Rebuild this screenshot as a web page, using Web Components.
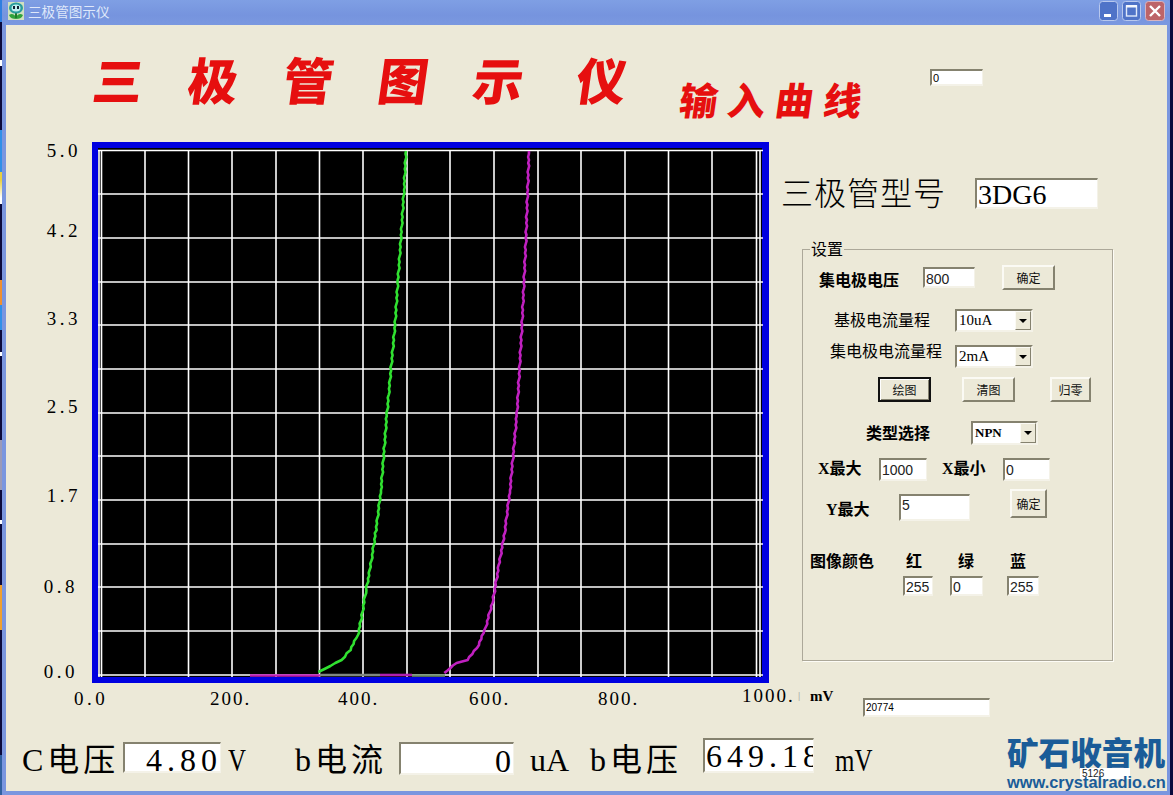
<!DOCTYPE html>
<html lang="zh">
<head>
<meta charset="utf-8">
<title>三极管图示仪</title>
<style>
    html, body { margin: 0; padding: 0; height: 100%; overflow: hidden; background: #0a0a3c; }
    body { font-family: "Liberation Serif", "Noto Sans CJK SC", serif; color: #000; }
</style>
</head>
<body>

<app-window caption="三极管图示仪">
    <form-row style="height:116px;padding-left:84px;align-items:flex-start">
        <big-title style="margin-top:26px;font-size:50px;letter-spacing:45px;width:587px">三极管图示<span style="margin-left:8px">仪</span></big-title>
        <big-title style="margin-top:53px;font-size:38px;letter-spacing:10px;width:253px">输入曲线</big-title>
        <sunk-field style="margin-top:44px;width:53px;height:17px;font-size:11px">0</sunk-field>
    </form-row>

    <form-row style="height:543px;align-items:flex-start">
        <axis-y></axis-y>
        <iv-plot></iv-plot>
        <side-panel></side-panel>
    </form-row>

    <form-row style="height:34px;padding-left:68px;align-items:flex-start">
        <axis-label style="width:136px;margin-top:5px;letter-spacing:3.5px">0.0</axis-label>
        <axis-label style="width:128px;margin-top:5px">200.</axis-label>
        <axis-label style="width:131px;margin-top:5px">400.</axis-label>
        <axis-label style="width:129px;margin-top:5px">600.</axis-label>
        <axis-label style="width:144px;margin-top:5px">800.</axis-label>
        <axis-label style="width:56px;margin-top:2px">1000.</axis-label>
        <axis-label style="width:12px;margin-top:1px;color:#999;font-size:11px;letter-spacing:0">|</axis-label>
        <form-label style="width:53px;margin-top:4px;font-size:15px;font-weight:700">mV</form-label>
        <sunk-field style="margin-top:14px;width:127px;height:19px;font-size:10px">20774</sunk-field>
    </form-row>

    <form-row style="height:73px;padding-left:16px;align-items:flex-start;font-size:32px">
        <form-label style="width:101px;margin-top:26px;line-height:32px;letter-spacing:4px">C电压</form-label>
        <sunk-field style="margin-top:24px;width:98px;height:31px;font-size:32px;line-height:22px;padding:4px 0 0 21px;overflow:visible;font-family:'Liberation Serif',serif;letter-spacing:5px">4.80</sunk-field>
        <form-label style="width:74px;margin-top:26px;line-height:32px;padding-left:7px;box-sizing:border-box"><squeeze-text>V</squeeze-text></form-label>
        <form-label style="width:104px;margin-top:26px;line-height:32px;letter-spacing:4px">b电流</form-label>
        <sunk-field style="margin-top:24px;width:115px;height:33px;font-size:32px;line-height:22px;padding:4px 2px 0 0;overflow:visible;font-family:'Liberation Serif',serif;justify-content:flex-end">0</sunk-field>
        <form-label style="width:76px;margin-top:26px;line-height:32px;padding-left:16px;box-sizing:border-box">uA</form-label>
        <form-label style="width:113px;margin-top:26px;line-height:32px;letter-spacing:4px">b电压</form-label>
        <sunk-field style="margin-top:20px;width:111px;height:35px;font-size:32px;line-height:28px;font-family:'Liberation Serif',serif;letter-spacing:5px">649.18</sunk-field>
        <form-label style="width:193px;margin-top:26px;line-height:32px;padding-left:21px;box-sizing:border-box"><squeeze-text>mV</squeeze-text></form-label>
        <site-logo style="margin-top:15px"></site-logo>
    </form-row>
</app-window>

<template id="side-panel-tpl">
    <style>
        :host { display: flex; flex-direction: column; margin-left: 14px; }
        .model { display: flex; align-items: center; margin-top: 37px; height: 31px; }
        .model form-label { width: 192px; font-size: 32px; line-height: 32px; letter-spacing: 1px; font-weight: 300; margin-top: -5px; font-family: "Noto Sans CJK SC", sans-serif; margin-left: -2px; }
        group-box { margin: 40px 0 0 19px; width: 311px; height: 412px; }
        .bold { font-weight: 700; font-size: 16px; line-height: 20px; }
        .plain { font-size: 16px; line-height: 20px; }
        sunk-field { font-size: 14px; font-family: "Liberation Sans", sans-serif; color: #222; }
        xp-combo { font-size: 15px; }
    </style>
    <div class="model">
        <form-label>三极管型号</form-label>
        <sunk-field style="width:123px;height:31px;font-size:28px;line-height:26px;padding-top:2px;color:#000;font-family:'Liberation Serif',serif;margin-left:2px">3DG6</sunk-field>
    </div>
    <group-box label="设置">
        <form-row style="height:25px;margin-top:15px;padding-left:16px">
            <form-label class="bold" style="width:104px;margin-top:6px">集电极电压</form-label>
            <sunk-field style="width:52px;height:21px;padding-top:2px">800</sunk-field>
            <xp-button style="margin-left:27px;width:53px;height:25px">确定</xp-button>
        </form-row>
        <form-row style="height:23px;margin-top:19px;padding-left:31px">
            <form-label class="plain" style="width:121px;margin-top:1px">基极电流量程</form-label>
            <xp-combo style="width:78px;height:23px">10uA</xp-combo>
        </form-row>
        <form-row style="height:23px;margin-top:13px;padding-left:27px">
            <form-label class="plain" style="width:125px;margin-top:-9px">集电极电流量程</form-label>
            <xp-combo style="width:78px;height:23px">2mA</xp-combo>
        </form-row>
        <form-row style="height:25px;margin-top:9px;padding-left:75px">
            <xp-button default style="width:53px;height:25px">绘图</xp-button>
            <xp-button style="margin-left:31px;width:53px;height:25px">清图</xp-button>
            <xp-button style="margin-left:35px;width:41px;height:25px">归零</xp-button>
        </form-row>
        <form-row style="height:24px;margin-top:19px;padding-left:63px">
            <form-label class="bold" style="width:105px;margin-top:2px">类型选择</form-label>
            <xp-combo style="width:67px;height:24px;font-size:13px;font-weight:700">NPN</xp-combo>
        </form-row>
        <form-row style="height:23px;margin-top:13px;padding-left:15px">
            <form-label class="bold" style="width:61px;margin-top:-1px">X最大</form-label>
            <sunk-field style="width:48px;height:23px">1000</sunk-field>
            <form-label class="bold" style="width:61px;margin-left:15px;margin-top:-1px">X最小</form-label>
            <sunk-field style="width:47px;height:23px">0</sunk-field>
        </form-row>
        <form-row style="height:32px;margin-top:8px;padding-left:23px;align-items:flex-start">
            <form-label class="bold" style="width:73px;margin-top:11px">Y最大</form-label>
            <sunk-field style="width:71px;height:27px;margin-top:5px;padding-bottom:6px">5</sunk-field>
            <xp-button style="margin-left:40px;width:37px;height:29px">确定</xp-button>
        </form-row>
        <form-row style="height:18px;margin-top:31px;padding-left:7px">
            <form-label class="bold" style="width:96px;margin-top:2px">图像颜色</form-label>
            <form-label class="bold" style="width:52px;margin-top:2px">红</form-label>
            <form-label class="bold" style="width:52px;margin-top:2px">绿</form-label>
            <form-label class="bold" style="width:20px;margin-top:2px">蓝</form-label>
        </form-row>
        <form-row style="height:20px;margin-top:6px;padding-left:100px">
            <sunk-field style="width:30px;height:20px;padding-top:2px">255</sunk-field>
            <sunk-field style="width:33px;height:20px;padding-top:2px;margin-left:17px">0</sunk-field>
            <sunk-field style="width:32px;height:20px;padding-top:2px;margin-left:24px">255</sunk-field>
        </form-row>
    </group-box>
</template>

<script>
    class AppWindow extends HTMLElement {
        constructor() {
            super();
            this.attachShadow({ mode: 'open' });
            const caption = this.getAttribute('caption') || '';
            this.shadowRoot.innerHTML = `
                <style>
                    :host { display: flex; width: 1173px; height: 795px; }
                    .desk { width: 2px; flex: none; background: linear-gradient(#2f7fe0 0 22px, #0a0a3c 22px 60px, #fff 60px 66px, #0a0a3c 66px 130px, #2f8fe8 130px 172px, #e8d040 172px 180px, #fff 198px 204px, #0a0a3c 204px 280px, #f09030 280px 305px, #3090e8 305px 330px, #0a0a3c 330px 352px, #fff 352px 356px, #0a0a3c 356px 440px, #9a9ab8 440px 490px, #0a0a3c 490px 520px, #fff 520px 524px, #0a0a3c 524px 585px, #f0a030 585px 630px, #0a0a3c 630px 755px, #3060a0 755px 795px); }
                    .desk.right { width: 3px; background: #0a0a3c; }
                    .frame { flex: 1; display: flex; flex-direction: column; background: #7a96df; }
                    .title { height: 25px; flex: none; display: flex; align-items: center; padding: 0 0 3px 6px; box-sizing: border-box;
                             background: linear-gradient(#7f9fe4, #7694de 60%, #7a98e0); border-radius: 4px 4px 0 0;
                             color: #dfe8fa; font: 13.6px "Noto Sans CJK SC", sans-serif; }
                    .title svg.icon { margin-right: 4px; flex: none; }
                    .title .cap { flex: 1; }
                    .btns { display: flex; gap: 4px; padding-right: 5px; }
                    .btns svg { display: block; }
                    .client { flex: 1; margin: 0 3px 4px 4px; background: #ece9d8; display: flex; flex-direction: column; }
                </style>
                <div class="desk"></div>
                <div class="frame">
                    <div class="title">
                        <svg class="icon" width="16" height="18" viewBox="0 0 16 18">
                            <rect width="16" height="18" fill="#cfe0c0"/>
                            <path d="M1 13c3-2 5-1 7 2 2-3 4-4 7-2-1 3-4 4-7 4s-6-1-7-4z" fill="#2fa33a"/>
                            <rect x="7" y="10" width="2" height="6" fill="#1e7a2a"/>
                            <ellipse cx="8" cy="6" rx="7" ry="5.5" fill="#2a9c9c"/>
                            <ellipse cx="8" cy="6" rx="4.5" ry="3.6" fill="#bfeff0"/>
                            <rect x="5" y="4" width="2" height="3" fill="#123"/>
                            <rect x="9" y="4" width="2" height="3" fill="#123"/>
                        </svg>
                        <span class="cap">${caption}</span>
                        <div class="btns">
                            <svg width="19" height="20" viewBox="0 0 19 20"><rect x=".5" y=".5" width="18" height="19" rx="3" fill="#4f73c8" stroke="#b8c8ee"/><rect x="5" y="13" width="7" height="3" fill="#fff"/></svg>
                            <svg width="19" height="20" viewBox="0 0 19 20"><rect x=".5" y=".5" width="18" height="19" rx="3" fill="#4f73c8" stroke="#b8c8ee"/><rect x="4.5" y="5" width="10" height="10" fill="none" stroke="#dfe8fa" stroke-width="1.4"/><rect x="4" y="4" width="11" height="2.5" fill="#f4f7fe"/></svg>
                            <svg width="20" height="20" viewBox="0 0 20 20"><rect x=".5" y=".5" width="19" height="19" rx="3" fill="#bd6468" stroke="#d8b4c0"/><path d="M5 5l10 10M15 5L5 15" stroke="#fff" stroke-width="2.4"/></svg>
                        </div>
                    </div>
                    <div class="client"><slot></slot></div>
                </div>
                <div class="desk right"></div>
            `;
        }
    }

    class BigTitle extends HTMLElement {
        constructor() {
            super();
            this.attachShadow({ mode: 'open' });
            this.shadowRoot.innerHTML = `
                <style>
                    :host { display: block; white-space: nowrap; color: #e60f0f; font-family: "Noto Sans CJK SC", sans-serif; font-weight: 900; line-height: 1.1; transform: skewX(-8deg); transform-origin: left bottom; }
                </style>
                <slot></slot>
            `;
        }
    }

    class FormRow extends HTMLElement {
        constructor() {
            super();
            this.attachShadow({ mode: 'open' });
            this.shadowRoot.innerHTML = `
                <style>
                    :host { display: flex; align-items: center; flex: none; box-sizing: border-box; }
                </style>
                <slot></slot>
            `;
        }
    }

    class FormLabel extends HTMLElement {
        constructor() {
            super();
            this.attachShadow({ mode: 'open' });
            this.shadowRoot.innerHTML = `
                <style>
                    :host { display: block; flex: none; white-space: nowrap; font-family: "Liberation Serif", "Noto Sans CJK SC", serif; }
                </style>
                <slot></slot>
            `;
        }
    }

    // the original font has narrow latin letters, Liberation Serif does not
    class SqueezeText extends HTMLElement {
        constructor() {
            super();
            this.attachShadow({ mode: 'open' });
            this.shadowRoot.innerHTML = `
                <style>
                    :host { display: inline-block; transform: scaleX(.78); transform-origin: left center; }
                </style>
                <slot></slot>
            `;
        }
    }

    class AxisLabel extends HTMLElement {
        constructor() {
            super();
            this.attachShadow({ mode: 'open' });
            this.shadowRoot.innerHTML = `
                <style>
                    :host { display: block; flex: none; height: 20px; white-space: nowrap; font: 19px/20px "Liberation Serif", serif; letter-spacing: 2px; }
                </style>
                <slot></slot>
            `;
        }
    }

    class AxisY extends HTMLElement {
        constructor() {
            super();
            this.attachShadow({ mode: 'open' });
            // distances between labels are not even in the original, kept as they are
            this.shadowRoot.innerHTML = `
                <style>
                    :host { display: grid; flex: none; width: 86px; height: 543px; box-sizing: border-box; padding-right: 11px;
                            grid-template-rows: 80px 88px 88px 89px 91px 85px 20px; justify-items: end; }
                    axis-label { letter-spacing: 3.5px; }
                </style>
                <axis-label>5.0</axis-label>
                <axis-label>4.2</axis-label>
                <axis-label>3.3</axis-label>
                <axis-label>2.5</axis-label>
                <axis-label>1.7</axis-label>
                <axis-label style="margin-right:3px">0.8</axis-label>
                <axis-label style="margin-right:3px">0.0</axis-label>
            `;
        }
    }

    class IvPlot extends HTMLElement {
        constructor() {
            super();
            this.attachShadow({ mode: 'open' });
            const ox = 92, oy = 141;
            const xs = [99, 101.5, 145, 188.5, 232, 276, 319.5, 363, 407, 450, 494, 538, 581, 625, 668.5, 712, 756.5, 760];
            const ys = [150.5, 194, 238, 282, 325, 369, 413, 456, 500, 544, 587, 631, 675];
            let grid = '';
            xs.forEach(x => { grid += `<path d="M${x - ox} 9V536"/>`; });
            ys.forEach(y => { grid += `<path d="M6 ${y - oy}H671"/>`; });

            const green = [[319, 672], [330, 666], [342, 660], [350, 650], [358, 635], [362, 615], [366, 590], [370, 570], [376, 530], [381, 490], [387, 413], [395, 325], [398, 280], [401, 238], [404, 190], [406, 151]];
            const pink = [[445, 673], [450, 668], [457, 663], [467, 660], [477, 648], [485, 630], [493, 600], [499, 565], [505, 530], [510, 490], [517, 413], [522, 325], [526, 238], [529, 151]];

            this.shadowRoot.innerHTML = `
                <style>
                    :host { display: block; flex: none; width: 677px; height: 543px; }
                    svg { display: block; }
                    .grid path { stroke: #fff; stroke-width: 1.6; fill: none; }
                    .curve { fill: none; stroke-width: 2.6; stroke-linejoin: round; }
                </style>
                <svg width="677" height="543" viewBox="0 0 677 543">
                    <rect x="0" y="1" width="677" height="541" fill="#0000e0"/>
                    <rect x="6" y="7" width="664" height="529" fill="#000"/>
                    <g class="grid">${grid}</g>
                    <path class="curve" stroke="#c020b8" d="M158 534.5H228"/>
                    <path class="curve" stroke="#808880" d="M228 534H288"/>
                    <path class="curve" stroke="#b020b0" d="M288 534H320"/>
                    <path class="curve" stroke="#709070" d="M320 534.5H353"/>
                    <polyline class="curve" stroke="#30e030" points="${this.trace(green, ox, oy)}"/>
                    <polyline class="curve" stroke="#c020c0" points="${this.trace(pink, ox, oy)}"/>
                </svg>
            `;
        }

        // runs along the given points in 3px steps, with a small wobble like the sampled signal
        trace(points, ox, oy) {
            const out = [];
            for (let i = 0; i < points.length - 1; i++) {
                const [x1, y1] = points[i];
                const [x2, y2] = points[i + 1];
                const steps = Math.max(1, Math.round(Math.abs(y2 - y1) / 3));
                for (let s = 0; s < steps; s++) {
                    const t = s / steps;
                    const wobble = ((i * 3 + s * 7) % 5 - 2) * 0.35;
                    out.push(`${(x1 + (x2 - x1) * t + wobble - ox).toFixed(1)},${(y1 + (y2 - y1) * t - oy).toFixed(1)}`);
                }
            }
            const last = points[points.length - 1];
            out.push(`${last[0] - ox},${last[1] - oy}`);
            return out.join(' ');
        }
    }

    class SunkField extends HTMLElement {
        constructor() {
            super();
            this.attachShadow({ mode: 'open' });
            this.shadowRoot.innerHTML = `
                <style>
                    :host { display: flex; align-items: center; flex: none; box-sizing: border-box; overflow: hidden; white-space: nowrap; padding: 0 1px;
                            background: #fff; font-family: "Liberation Sans", sans-serif;
                            border: 2px solid; border-color: #85826f #f4f2e8 #f4f2e8 #85826f; border-width: 2px 1px 2px 2px; }
                </style>
                <slot></slot>
            `;
        }
    }

    class XpButton extends HTMLElement {
        constructor() {
            super();
            this.attachShadow({ mode: 'open' });
            this.shadowRoot.innerHTML = `
                <style>
                    :host { display: flex; align-items: center; justify-content: center; flex: none; box-sizing: border-box;
                            background: #ece9d8; font: 12px "Noto Sans CJK SC", sans-serif; color: #111;
                            border: 2px solid; border-color: #fbfaf4 #85826f #85826f #fbfaf4; }
                    :host([default]) { border: 2px solid #111; box-shadow: inset 1px 1px 0 #fff, inset -1px -1px 0 #85826f; }
                </style>
                <slot></slot>
            `;
        }
    }

    class XpCombo extends HTMLElement {
        constructor() {
            super();
            this.attachShadow({ mode: 'open' });
            this.shadowRoot.innerHTML = `
                <style>
                    :host { display: flex; align-items: center; flex: none; box-sizing: border-box; background: #fff; font-family: "Liberation Serif", serif; white-space: nowrap;
                            border: 2px solid; border-color: #85826f #f4f2e8 #f4f2e8 #85826f; padding-left: 2px; }
                    .val { flex: 1; }
                    .arrow { width: 16px; align-self: stretch; box-sizing: border-box; background: #ece9d8; border: 1px solid; border-color: #fbfaf4 #85826f #85826f #fbfaf4; display: flex; align-items: center; justify-content: center; }
                    .arrow::after { content: ""; border: 4px solid transparent; border-top-color: #000; border-bottom: 0; }
                </style>
                <span class="val"><slot></slot></span>
                <span class="arrow"></span>
            `;
        }
    }

    class GroupBox extends HTMLElement {
        constructor() {
            super();
            this.attachShadow({ mode: 'open' });
            const label = this.getAttribute('label') || '';
            this.shadowRoot.innerHTML = `
                <style>
                    :host { display: flex; flex-direction: column; flex: none; position: relative; box-sizing: border-box; border: 1px solid #aca899; box-shadow: 1px 1px 0 #fdfcf6; }
                    .legend { position: absolute; left: 7px; top: -11px; padding: 0 1px; background: #ece9d8; font: 16px/18px "Noto Sans CJK SC", sans-serif; }
                </style>
                <span class="legend">${label}</span>
                <slot></slot>
            `;
        }
    }

    class SidePanel extends HTMLElement {
        constructor() {
            super();
            this.attachShadow({ mode: 'open' });
            const tpl = document.getElementById('side-panel-tpl');
            this.shadowRoot.appendChild(tpl.content.cloneNode(true));
        }
    }

    class SiteLogo extends HTMLElement {
        constructor() {
            super();
            this.attachShadow({ mode: 'open' });
            this.shadowRoot.innerHTML = `
                <style>
                    :host { display: flex; flex-direction: column; flex: none; position: relative; width: 158px; color: #1a5c98; white-space: nowrap; }
                    .cn { font: 900 31.6px/36px "Noto Sans CJK SC", sans-serif; }
                    .url { position: relative; font: 700 16.4px/20px "Liberation Sans", sans-serif; margin-top: 3px; }
                    .over { position: absolute; left: 73px; top: 35px; width: 50px; height: 11px; background: #fff; color: #222; font: 10px/12px "Liberation Sans", sans-serif; padding-left: 2px; box-sizing: border-box; }
                </style>
                <span class="cn">矿石收音机</span>
                <span class="over">5126</span>
                <span class="url">www.crystalradio.cn</span>
            `;
        }
    }

    customElements.define('form-row', FormRow);
    customElements.define('form-label', FormLabel);
    customElements.define('squeeze-text', SqueezeText);
    customElements.define('axis-label', AxisLabel);
    customElements.define('axis-y', AxisY);
    customElements.define('sunk-field', SunkField);
    customElements.define('xp-button', XpButton);
    customElements.define('xp-combo', XpCombo);
    customElements.define('group-box', GroupBox);
    customElements.define('big-title', BigTitle);
    customElements.define('iv-plot', IvPlot);
    customElements.define('side-panel', SidePanel);
    customElements.define('site-logo', SiteLogo);
    customElements.define('app-window', AppWindow);
</script>
</body>
</html>
